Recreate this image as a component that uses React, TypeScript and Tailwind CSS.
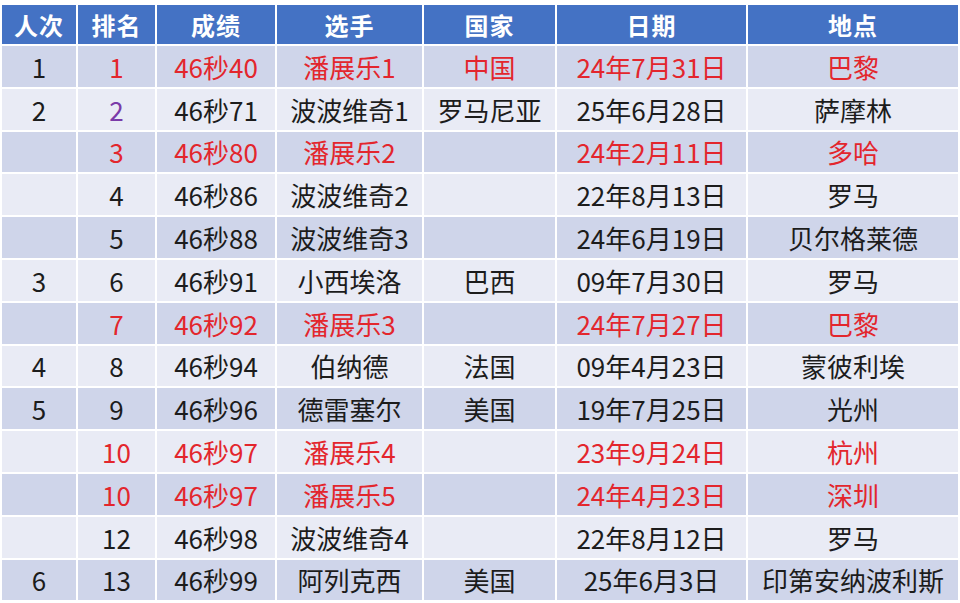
const headers = ['人次', '排名', '成绩', '选手', '国家', '日期', '地点']

type Row = { cells: string[]; red?: boolean; purpleRank?: boolean }

const rows: Row[] = [
  { cells: ['1', '1', '46秒40', '潘展乐1', '中国', '24年7月31日', '巴黎'], red: true },
  { cells: ['2', '2', '46秒71', '波波维奇1', '罗马尼亚', '25年6月28日', '萨摩林'], purpleRank: true },
  { cells: ['', '3', '46秒80', '潘展乐2', '', '24年2月11日', '多哈'], red: true },
  { cells: ['', '4', '46秒86', '波波维奇2', '', '22年8月13日', '罗马'] },
  { cells: ['', '5', '46秒88', '波波维奇3', '', '24年6月19日', '贝尔格莱德'] },
  { cells: ['3', '6', '46秒91', '小西埃洛', '巴西', '09年7月30日', '罗马'] },
  { cells: ['', '7', '46秒92', '潘展乐3', '', '24年7月27日', '巴黎'], red: true },
  { cells: ['4', '8', '46秒94', '伯纳德', '法国', '09年4月23日', '蒙彼利埃'] },
  { cells: ['5', '9', '46秒96', '德雷塞尔', '美国', '19年7月25日', '光州'] },
  { cells: ['', '10', '46秒97', '潘展乐4', '', '23年9月24日', '杭州'], red: true },
  { cells: ['', '10', '46秒97', '潘展乐5', '', '24年4月23日', '深圳'], red: true },
  { cells: ['', '12', '46秒98', '波波维奇4', '', '22年8月12日', '罗马'] },
  { cells: ['6', '13', '46秒99', '阿列克西', '美国', '25年6月3日', '印第安纳波利斯'] },
]

function cellColor(row: Row, col: number) {
  if (row.red && col > 0) return 'text-[#e3262d]'
  if (row.purpleRank && col === 1) return 'text-[#7a3aa8]'
  return 'text-[#1c1c1c]'
}

export default function App() {
  return (
    <div className="h-[603px] w-[960px] bg-white pl-[2px] pt-[5px] font-['Noto_Sans_CJK_SC','Noto_Sans',sans-serif]">
      <div className="grid w-[956px] grid-cols-[74px_77px_118px_145px_131px_189px_210px] grid-rows-[39px_repeat(13,40.8px)] gap-[2px]">
        {headers.map((h) => (
          <div
            key={h}
            className="flex items-center justify-center bg-[#4472c4] text-[24px] font-bold tracking-[1px] text-white"
          >
            {h}
          </div>
        ))}
        {rows.map((row, r) =>
          row.cells.map((c, i) => (
            <div
              key={`${r}-${i}`}
              className={`flex items-center justify-center pt-[1px] text-[26px] leading-none ${
                r % 2 === 0 ? 'bg-[#cfd5ea]' : 'bg-[#e9ebf5]'
              } ${cellColor(row, i)}`}
            >
              {c}
            </div>
          ))
        )}
      </div>
    </div>
  )
}
